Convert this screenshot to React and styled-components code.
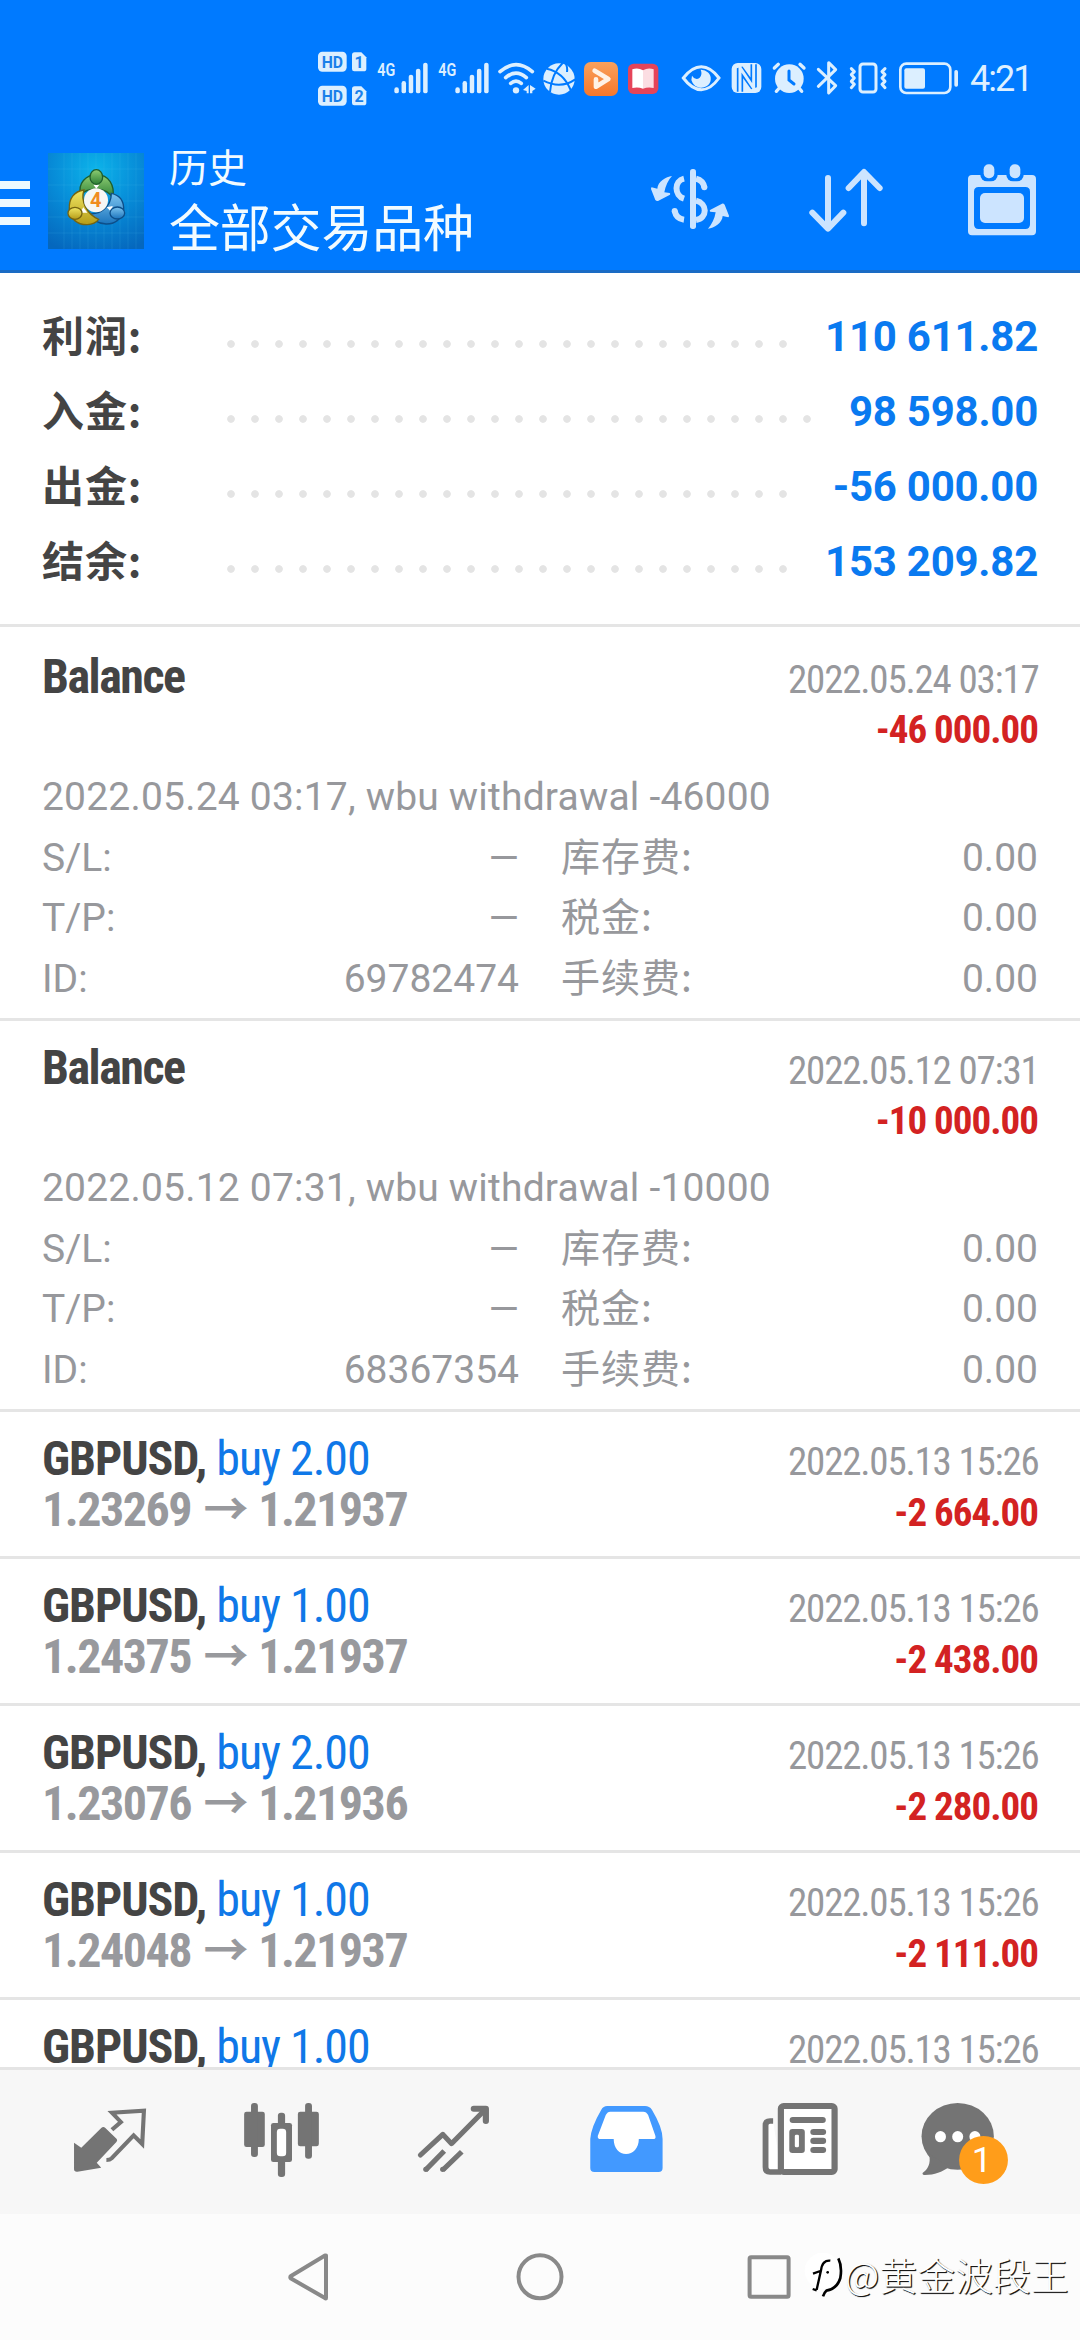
import React from "react";
import styled, { createGlobalStyle } from "styled-components";

const GlobalStyle = createGlobalStyle`
  *, *::before, *::after { box-sizing: border-box; }
  html, body { margin: 0; padding: 0; background: #fff; }
  svg { display: block; flex: none; }
`;

const cjk = `"Noto Sans CJK SC", sans-serif`;
const roboto = `Roboto, "Noto Sans CJK SC", sans-serif`;
const condensed = `"Roboto Condensed", Roboto, "Noto Sans CJK SC", sans-serif`;

const Screen = styled.div`
  width: 1080px;
  height: 2340px;
  display: flex;
  flex-direction: column;
  position: relative;
  overflow: hidden;
  background: #fff;
  font-family: ${roboto};
  color: #444;
`;

/* ---------- header ---------- */
const Header = styled.header`
  height: 273px;
  flex: none;
  background: #007aff;
  border-bottom: 3px solid #1a6bc4;
`;
const StatusBar = styled.div`
  height: 130px;
  padding: 30px 0 10px 310px;
  display: flex;
`;
const Clock = styled.span`
  padding-left: 8px;
  font: 400 36px/98px ${roboto};
  letter-spacing: -2px;
  color: #def0ff;
`;
const AppBar = styled.div`
  height: 140px;
  display: flex;
  align-items: flex-start;
`;
const MenuButton = styled.div`
  width: 30px;
  margin: 51px 18px 0 0;
  display: flex;
  flex-direction: column;
  gap: 10px;
`;
const MenuBar = styled.i`
  height: 8px;
  background: #ecf9ff;
`;
const LogoBox = styled.div`
  margin-top: 23px;
`;
const Titles = styled.div`
  flex: 1;
  margin: 5px 0 0 25px;
  font-family: ${cjk};
  color: #f2fbff;
`;
const Caption = styled.div`
  font-size: 39px;
  line-height: 60px;
`;
const Title = styled.div`
  font-size: 51px;
  line-height: 61px;
  letter-spacing: -0.2px;
`;

/* ---------- summary ---------- */
const Summary = styled.section`
  height: 354px;
  flex: none;
  padding: 26px 42px 0;
  border-bottom: 3px solid #e5e5e5;
`;
const SummaryRow = styled.div`
  height: 75px;
  display: flex;
  align-items: center;
`;
const SummaryLabel = styled.span`
  width: 177px;
  margin-bottom: 5px;
  font: 700 42px/60px ${cjk};
  letter-spacing: 0.9px;
`;
const Leader = styled.i`
  width: ${(p) => p.$dots * 24}px;
  height: 8px;
  margin-top: 15px;
  background: radial-gradient(circle at 50% 50%, #e4e4e4 3.4px, transparent 4.2px) 0 0 / 24px 8px repeat-x;
`;
const SummaryValue = styled.span`
  margin-left: auto;
  font: 700 42px/75px ${roboto};
  letter-spacing: -0.25px;
  color: #0a7af0;
`;

/* ---------- history list ---------- */
const History = styled.main`
  height: 1440px;
  flex: none;
  overflow: hidden;
`;
const Item = styled.article`
  height: ${(p) => p.$height}px;
  padding: ${(p) => p.$top}px 42px 0;
  border-bottom: 3px solid #e5e5e5;
`;
const Line = styled.div`
  height: 50.5px;
  display: flex;
  justify-content: space-between;
  align-items: baseline;
  font-family: ${condensed};
  font-stretch: 75%;
  line-height: 50.5px;
`;
const Name = styled.b`
  font-size: 48px;
  letter-spacing: ${(p) => p.$tracking || "-1.05px"};
  white-space: pre;
`;
const Volume = styled.span`
  font-weight: 400;
  color: #0f78e8;
`;
const Price = styled.b`
  font-size: 48px;
  letter-spacing: -1.5px;
  color: #98999d;
`;
const To = styled.span`
  margin-left: 3px;
  font-family: ${cjk};
  font-size: 45px;
  line-height: 0;
  letter-spacing: 0;
`;
const Time = styled.time`
  margin-right: -0.5px;
  font-size: 39px;
  letter-spacing: -1.2px;
  color: #97989c;
`;
const Amount = styled.b`
  font-size: 39px;
  letter-spacing: -1px;
  color: #d32222;
`;
const Details = styled.div`
  margin-top: 14.5px;
  font-size: 39px;
  line-height: 60.7px;
  color: #97989c;
`;
const Comment = styled.div`
  letter-spacing: 0.2px;
`;
const Grid = styled.div`
  display: grid;
  grid-template-columns: 1fr 1fr;
  column-gap: 42px;
`;
const Field = styled.div`
  height: 60.7px;
  display: flex;
  justify-content: space-between;
  align-items: baseline;
`;
const Label = styled.span``;
const FeeLabel = styled.span`
  font-family: ${cjk};
  line-height: 39px;
  letter-spacing: 1px;
`;

/* ---------- bottom bars ---------- */
const TabBar = styled.nav`
  height: 147px;
  flex: none;
  padding: 0 24px;
  display: flex;
  border-top: 3px solid #e4e4e4;
  background: #f7f7f7;
`;
const SystemNav = styled.footer`
  flex: 1;
  display: flex;
  justify-content: center;
  gap: 171px;
  background: #fcfcfc;
`;
const Watermark = styled.div`
  position: absolute;
  left: 803px;
  bottom: 39px;
  display: flex;
  align-items: center;
  font: 300 37.5px/54px ${cjk};
  letter-spacing: 0.4px;
  color: #fff;
  text-shadow: 1px 1px 1px #111, 1px 1px 0 #444;
  white-space: nowrap;
`;

const StatusIcon = ({ x, w, base = 300, children }) => (
  <svg width={w} height="90" viewBox={`${(x - base) * 3} 0 ${w * 3} 270`} fill="#dcefff">
    {children}
  </svg>
);

const HdBadge = ({ y, n }) => (
  <g>
    <rect x="54" y={y} width="86" height="60" rx="13" />
    <path d={`M164 ${y + 2} H184 L199 ${y + 17} V${y + 52} Q199 ${y + 59} 191 ${y + 59} H163 Q156 ${y + 59} 156 ${y + 52} V${y + 10} Q156 ${y + 2} 164 ${y + 2}Z`} />
    <g fill="#1a80ea" fontFamily="Roboto, sans-serif" fontWeight="700" textAnchor="middle">
      <text x="97" y={y + 48} fontSize="51" textLength="64" lengthAdjust="spacingAndGlyphs">HD</text>
      <text x="177" y={y + 48} fontSize="48">{n}</text>
    </g>
  </g>
);

const Signal = ({ x }) => (
  <StatusIcon x={x} w={61}>
    <g transform={`translate(${(x - 372) * 3} 0)`}>
      <text x="232" y="138" fontSize="56" fontFamily="Roboto, sans-serif" fontWeight="600" textLength="54" lengthAdjust="spacingAndGlyphs">4G</text>
      {[172, 153, 134, 116, 98].map((top, i) => (
        <rect key={top} x={283 + i * 21.6} y={top} width="13.5" height={190 - top} rx="6.5" />
      ))}
    </g>
  </StatusIcon>
);

const StatusIcons = () => (
  <>
    <StatusIcon x={310} w={62}>
      <HdBadge y={65} n="1" />
      <HdBadge y={167} n="2" />
    </StatusIcon>
    <Signal x={372} />
    <Signal x={433} />
    <StatusIcon x={494} w={45}>
      <circle cx="648" cy="181" r="9.5" />
      <g fill="none" stroke="#dcefff" strokeWidth="11" strokeLinecap="round">
        <path d="M600 125 Q648 83 697 125" />
        <path d="M617 143 Q648 116 679 143" />
        <path d="M632 160 Q648 147 664 160" />
      </g>
      <path d="M686 165 V190 H680 V183 L669 180Z M690 165 L707 176 L697 183 V190 H690Z" />
    </StatusIcon>
    <StatusIcon x={539} w={41}>
      <circle cx="777" cy="147" r="47" />
      <g fill="none" stroke="#007aff" strokeWidth="6">
        <path d="M740 116 Q790 126 812 180" />
        <path d="M788 99 Q754 132 750 186" />
        <path d="M730 152 Q782 178 826 148" />
        <path d="M797 102 Q803 110 801 126" />
      </g>
    </StatusIcon>
    <StatusIcon x={580} w={43}>
      <defs>
        <linearGradient id="play" x1="0" y1="0" x2="0" y2="1">
          <stop offset="0" stopColor="#f9a15c" />
          <stop offset="1" stopColor="#f6772b" />
        </linearGradient>
      </defs>
      <rect x="852" y="96" width="102" height="102" rx="20" fill="url(#play)" />
      <path d="M884 122 L925 147 L888 170 V148" fill="none" stroke="#fff2e6" strokeWidth="14" strokeLinejoin="round" strokeLinecap="round" />
    </StatusIcon>
    <StatusIcon x={623} w={47}>
      <rect x="984" y="101" width="91" height="91" rx="17" fill="#e54459" />
      <path d="M997 118 Q1014 112 1029 121 V176 Q1014 170 997 174Z" fill="#fff" />
      <path d="M1029 121 Q1044 112 1061 118 V174 Q1044 170 1029 176Z" fill="#fbdde2" />
    </StatusIcon>
    <StatusIcon x={670} w={56} base={660}>
      <path d="M70 144 Q96 110 124 110 T177 144 Q152 179 124 179 T70 144Z" fill="none" stroke="#dcefff" strokeWidth="9" />
      <path d="M122 119 A29 27 0 1 1 96 137 Q107 154 119 143 Q128 133 122 119Z" />
    </StatusIcon>
    <StatusIcon x={726} w={41} base={660}>
      <rect x="215" y="99" width="89" height="90" rx="18" />
      <path d="M240 185 V115 L281 172 V103" fill="none" stroke="#007aff" strokeWidth="19" strokeLinejoin="bevel" />
      <path d="M240 188 V113 L281 174 V99" fill="none" stroke="#dcefff" strokeWidth="9" />
    </StatusIcon>
    <StatusIcon x={767} w={44} base={660}>
      <circle cx="388" cy="146" r="43" />
      <g fill="none" stroke="#dcefff" strokeWidth="10" strokeLinecap="round">
        <path d="M343 114 L355 103 M432 114 L420 103 M358 174 L349 184 M417 174 L425 184" />
      </g>
      <path d="M387 123 V150 L402 162" fill="none" stroke="#007aff" strokeWidth="9" strokeLinecap="round" />
    </StatusIcon>
    <StatusIcon x={811} w={32} base={660}>
      <path d="M475 118 L527 167 L506 189 V98 L527 119 L475 169" fill="none" stroke="#dcefff" strokeWidth="9" strokeLinejoin="round" strokeLinecap="round" />
    </StatusIcon>
    <StatusIcon x={843} w={50} base={660}>
      <g fill="none" stroke="#dcefff" strokeWidth="9" strokeLinejoin="round" strokeLinecap="round">
        <rect x="600" y="102" width="48" height="84" rx="9" />
        <path d="M574 116 L583 125 L574 134 L583 144 L574 154 L583 163 L574 173" />
        <path d="M675 116 L666 125 L675 134 L666 144 L675 154 L666 163 L675 173" />
      </g>
    </StatusIcon>
    <StatusIcon x={893} w={69} base={660}>
      <rect x="721" y="101" width="150" height="88" rx="18" fill="none" stroke="#dcefff" strokeWidth="8" />
      <rect x="733" y="115" width="62" height="61" rx="6" />
      <rect x="883" y="120" width="11" height="50" rx="5" />
    </StatusIcon>
  </>
);

const AppLogo = () => (
  <svg width="96" height="96" viewBox="144 69 288 288">
    <defs>
      <radialGradient id="sky" cx="0.5" cy="0.18" r="0.9">
        <stop offset="0" stopColor="#0cb4ea" />
        <stop offset="0.5" stopColor="#078cd8" />
        <stop offset="1" stopColor="#0567bd" />
      </radialGradient>
      <linearGradient id="green" x1="0" y1="0" x2="0" y2="1">
        <stop offset="0" stopColor="#8fce74" />
        <stop offset="1" stopColor="#2c7f35" />
      </linearGradient>
      <linearGradient id="yellow" x1="0" y1="0" x2="0" y2="1">
        <stop offset="0" stopColor="#f1e764" />
        <stop offset="1" stopColor="#b59c18" />
      </linearGradient>
      <linearGradient id="blue" x1="0" y1="0" x2="0" y2="1">
        <stop offset="0" stopColor="#7cc4ef" />
        <stop offset="1" stopColor="#1b74bd" />
      </linearGradient>
    </defs>
    <rect x="144" y="69" width="288" height="288" fill="url(#sky)" />
    <path d="M192 69V357M216 69V357M240 69V357M264 69V357M288 69V357M312 69V357M336 69V357M360 69V357M384 69V357M408 69V357M144 117H432M144 165H432M144 213H432M144 261H432M144 309H432" stroke="#5cc8f4" strokeOpacity="0.22" strokeWidth="2" />
    <g strokeWidth="4">
      <path d="M242 196 C232 160 258 134 290 134 C326 134 346 166 338 204 C320 170 262 170 242 196Z" fill="url(#green)" stroke="#1f5f2c" />
      <path d="M334 190 C362 196 372 214 371 240 C366 268 342 283 318 282 C292 280 272 266 262 250 C300 258 334 230 334 190Z" fill="url(#blue)" stroke="#0d4f8a" />
      <path d="M252 180 C222 184 206 206 208 238 C210 266 232 285 262 284 C278 283 290 276 296 268 C262 254 240 214 252 180Z" fill="url(#yellow)" stroke="#766410" />
      <path d="M250 232 L240 248 L262 248Z M338 228 L320 232 L334 246Z M280 164 L298 164 L289 176Z" fill="#fff" stroke="none" />
      <ellipse cx="289" cy="141" rx="19" ry="22" fill="url(#green)" stroke="#1f5f2c" />
      <ellipse cx="225" cy="250" rx="21" ry="18" fill="url(#yellow)" stroke="#766410" />
      <ellipse cx="352" cy="249" rx="22" ry="18" fill="url(#blue)" stroke="#0d4f8a" />
    </g>
    <circle cx="288" cy="211" r="36" fill="#f6f6f4" />
    <text x="287" y="232" textAnchor="middle" fontFamily="Roboto, sans-serif" fontWeight="700" fontSize="60" fill="#f08c1e">4</text>
  </svg>
);

const HeaderActions = () => (
  <svg width="460" height="140" viewBox="0 -60 1380 420" fill="#cce4ff">
    <g>
      <rect x="210" y="57" width="18" height="180" rx="8" />
      <g fill="none" stroke="#cce4ff" strokeWidth="18">
        <path d="M192 86 C162 93 162 136 192 146" />
        <path d="M228 86 C243 90 251 99 253 112 M164 182 C167 199 178 207 192 209" />
        <path d="M228 152 C263 160 263 204 228 210" />
      </g>
      <circle cx="253" cy="112" r="9" />
      <circle cx="164" cy="183" r="9" />
      <path id="swap" d="M156 78 C138 80 113 95 112 116 L95 112 Q93 113 93 117 L106 150 Q109 154 114 153 L150 134 Q152 131 149 129 L133 127 C136 108 145 90 156 78Z" />
      <use href="#swap" transform="rotate(180 210 157)" />
    </g>
    <g fill="none" stroke="#cce4ff" strokeWidth="18" strokeLinecap="round" strokeLinejoin="round">
      <path d="M624 84 V235 M577 188 L624 236 L670 188" />
      <path d="M732 220 V67 M686 114 L732 66 L779 114" />
    </g>
    <g>
      <path fillRule="evenodd" d="M1056 75 H1236 Q1248 75 1248 87 V244 Q1248 256 1236 256 H1056 Q1044 256 1044 244 V87 Q1044 75 1056 75Z M1076 111 Q1062 111 1062 125 V223 Q1062 237 1076 237 H1216 Q1230 237 1230 223 V125 Q1230 111 1216 111Z" />
      <g fill="#007aff">
        <rect x="1081" y="32" width="52" height="62" rx="20" />
        <rect x="1159" y="32" width="52" height="62" rx="20" />
      </g>
      <rect x="1091" y="43" width="32" height="42" rx="15" />
      <rect x="1169" y="43" width="32" height="42" rx="15" />
      <rect x="1080" y="129" width="132" height="90" rx="15" />
    </g>
  </svg>
);

/* Tab drawings share one fine grid: 499.5 x 432 units per 172 x 144 cell. */
const TabIcon = ({ x, children }) => (
  <svg width="172" height="144" viewBox={`${x} 90 499.5 432`} preserveAspectRatio="none" fill="#747474">
    {children}
  </svg>
);

const Tabs = () => (
  <TabBar>
    <TabIcon x={69.7}>
      <path d="M215 308 L236 323 L294 264 Q300 258 306 264 L339 297 Q342 302 338 306 L281 368 L294 383 L225 395 Q215 396 215 388Z" />
      <path d="M325 269 L351 246 L325 218 L418 212 L413 312 L388 286 L324 355 Q319 360 309 360" fill="none" stroke="#747474" strokeWidth="12" strokeLinejoin="miter" />
    </TabIcon>
    <TabIcon x={569.2}>
      <rect x="709" y="215" width="60" height="106" rx="7" />
      <rect x="729" y="189" width="20" height="162" rx="9" />
      <rect x="865" y="215" width="61" height="104" rx="7" />
      <rect x="886" y="189" width="20" height="167" rx="9" />
      <rect x="807" y="218" width="21" height="193" rx="9" />
      <rect x="787" y="249" width="61" height="117" rx="7" />
      <rect x="804" y="266" width="27" height="83" rx="10" fill="#fff" />
    </TabIcon>
    <TabIcon x={1068.7}>
      <g fill="none" stroke="#747474" strokeWidth="15" strokeLinejoin="round">
        <path d="M1221 345 L1286 283 L1311 311 L1410 208" strokeLinecap="round" />
        <path d="M1376 206 H1411 V243" strokeWidth="18" strokeLinecap="round" />
        <path d="M1236 390 L1290 333 M1286 390 L1341 335" />
      </g>
      <circle cx="1237" cy="388" r="8" />
      <circle cx="1286" cy="388" r="8" />
    </TabIcon>
    <TabIcon x={0}>
      <path d="M195 198 H305 Q318 198 325 209 Q356 262 356 297 V384 Q356 396 344 396 H158 Q146 396 146 384 V297 Q148 262 178 209 Q184 198 195 198Z" fill="#4299ff" />
      <path d="M204 215 H300 Q309 215 314 225 L335 287 Q338 297 328 297 H287 C287 325 270 342 250 342 C230 342 214 325 214 297 H176 Q166 297 168 287 L191 225 Q196 215 204 215Z" fill="#fff" />
    </TabIcon>
    <TabIcon x={499.5}>
      <path d="M677 243 H668 Q655 243 655 256 V382 Q655 396 668 396 H700" fill="#fff" stroke="#747474" strokeWidth="17" />
      <rect x="699.5" y="198" width="156" height="198" rx="8" fill="#fff" stroke="#747474" strokeWidth="18" />
      <rect x="725" y="231" width="105" height="18" rx="9" />
      <rect x="724" y="267" width="45" height="72" rx="9" />
      <rect x="740" y="284" width="12" height="38" rx="4" fill="#fff" />
      <rect x="785" y="267" width="46" height="18" rx="9" />
      <rect x="785" y="293" width="46" height="19" rx="9" />
      <rect x="785" y="321" width="46" height="18" rx="9" />
    </TabIcon>
    <TabIcon x={999}>
      <ellipse cx="1213" cy="289" rx="105" ry="100" />
      <path d="M1130 342 C1136 372 1126 388 1111 399 Q1110 405 1118 405 C1146 404 1168 396 1188 380Z" />
      <g fill="#fff">
        <ellipse cx="1163" cy="290" rx="16" ry="17" />
        <ellipse cx="1213" cy="290" rx="16" ry="17" />
        <ellipse cx="1263" cy="290" rx="16" ry="17" />
      </g>
      <ellipse cx="1288" cy="360" rx="71" ry="72" fill="#ff9d1a" />
      <text x="1283" y="396" textAnchor="middle" fontFamily="Roboto, sans-serif" fontSize="104" fill="#fff">1</text>
    </TabIcon>
  </TabBar>
);

const NavIcon = ({ x, children }) => (
  <svg width="60" height="126" viewBox={`${x} 2214 60 126`} fill="none" stroke="#898989" strokeWidth="4" strokeLinejoin="round">
    {children}
  </svg>
);

const totals = [
  ["利润:", "110 611.82", 24],
  ["入金:", "98 598.00", 25],
  ["出金:", "-56 000.00", 24],
  ["结余:", "153 209.82", 24],
];

const balances = [
  { time: "2022.05.24 03:17", amount: "-46 000.00", note: "wbu withdrawal -46000", id: "69782474", height: 394, top: 24.5 },
  { time: "2022.05.12 07:31", amount: "-10 000.00", note: "wbu withdrawal -10000", id: "68367354", height: 391, top: 21.5 },
];

const deals = [
  ["2.00", "1.23269", "1.21937", "-2 664.00"],
  ["1.00", "1.24375", "1.21937", "-2 438.00"],
  ["2.00", "1.23076", "1.21936", "-2 280.00"],
  ["1.00", "1.24048", "1.21937", "-2 111.00"],
  ["1.00", "", "", ""],
];

const BalanceItem = ({ time, amount, note, id, height, top }) => (
  <Item $height={height} $top={top}>
    <Line>
      <Name $tracking="-1.5px">Balance</Name>
      <Time>{time}</Time>
    </Line>
    <Line>
      <Name>{"\u00a0"}</Name>
      <Amount>{amount}</Amount>
    </Line>
    <Details>
      <Comment>{`${time}, ${note}`}</Comment>
      <Grid>
        {[
          ["S/L:", "—", "库存费:"],
          ["T/P:", "—", "税金:"],
          ["ID:", id, "手续费:"],
        ].map(([label, value, fee]) => (
          <React.Fragment key={label}>
            <Field>
              <Label>{label}</Label>
              <span>{value}</span>
            </Field>
            <Field>
              <FeeLabel>{fee}</FeeLabel>
              <span>0.00</span>
            </Field>
          </React.Fragment>
        ))}
      </Grid>
    </Details>
  </Item>
);

const DealItem = ({ volume, open, close, profit }) => (
  <Item $height={147} $top={22}>
    <Line>
      <Name>
        {"GBPUSD, "}
        <Volume>buy {volume}</Volume>
      </Name>
      <Time>2022.05.13 15:26</Time>
    </Line>
    {open && (
      <Line>
        <Price>
          {open} <To>→</To> {close}
        </Price>
        <Amount>{profit}</Amount>
      </Line>
    )}
  </Item>
);

export default function App() {
  return (
    <Screen>
      <GlobalStyle />
      <Header>
        <StatusBar>
          <StatusIcons />
          <Clock>4:21</Clock>
        </StatusBar>
        <AppBar>
          <MenuButton>
            <MenuBar />
            <MenuBar />
            <MenuBar />
          </MenuButton>
          <LogoBox>
            <AppLogo />
          </LogoBox>
          <Titles>
            <Caption>历史</Caption>
            <Title>全部交易品种</Title>
          </Titles>
          <HeaderActions />
        </AppBar>
      </Header>

      <Summary>
        {totals.map(([label, value, dots]) => (
          <SummaryRow key={label}>
            <SummaryLabel>{label}</SummaryLabel>
            <Leader $dots={dots} />
            <SummaryValue>{value}</SummaryValue>
          </SummaryRow>
        ))}
      </Summary>

      <History>
        {balances.map((b) => (
          <BalanceItem key={b.id} {...b} />
        ))}
        {deals.map(([volume, open, close, profit], i) => (
          <DealItem key={i} volume={volume} open={open} close={close} profit={profit} />
        ))}
      </History>

      <Tabs />

      <SystemNav>
        <NavIcon x={279}>
          <path d="M326 2255.5 V2298 Q326 2299 325 2298 L291 2278.5 Q289.5 2277 291 2276 L325 2255.5Z" />
        </NavIcon>
        <NavIcon x={510}>
          <circle cx="540" cy="2276.8" r="21.5" />
        </NavIcon>
        <NavIcon x={741}>
          <rect x="749.6" y="2257.3" width="39" height="39.5" rx="1.5" />
        </NavIcon>
      </SystemNav>

      <Watermark>
        <svg width="42" height="54" viewBox="756 645 126 162">
          <circle cx="815" cy="716" r="54" fill="#fff" />
          <path d="M838 686 Q814 683 810 715 L797 773 M786 725 L808 717 M785 771 L797 775" fill="none" stroke="#000" strokeWidth="7" />
          <path d="M862 679 Q874 703 868 738 Q858 771 826 776 Q820 781 816 793" fill="none" stroke="#000" strokeWidth="8" />
          <circle cx="830" cy="721" r="4" fill="#000" />
        </svg>
        @黄金波段王
      </Watermark>
    </Screen>
  );
}
